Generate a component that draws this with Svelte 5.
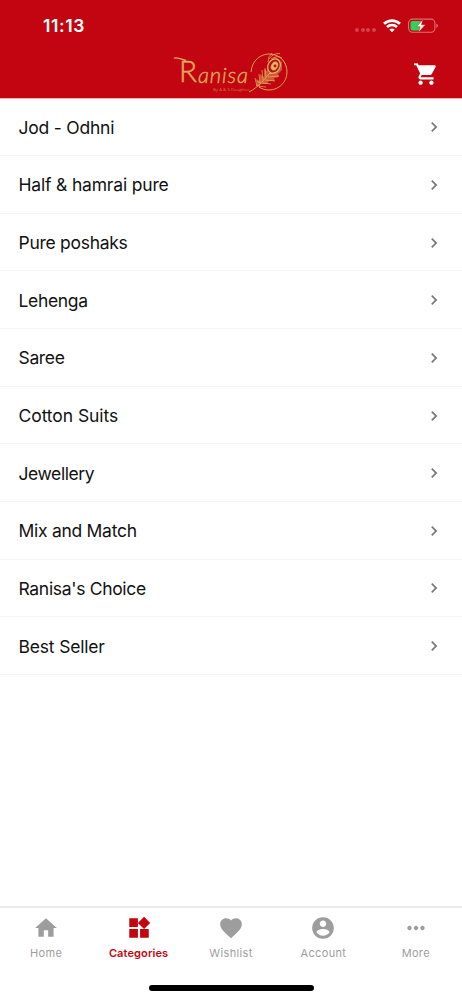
<script lang="ts">
  const categories = [
    { name: 'Jod - Odhni', spacing: -0.22 },
    { name: 'Half & hamrai pure', spacing: -0.18 },
    { name: 'Pure poshaks', spacing: -0.28 },
    { name: 'Lehenga', spacing: -0.33 },
    { name: 'Saree', spacing: -0.35 },
    { name: 'Cotton Suits', spacing: -0.07 },
    { name: 'Jewellery', spacing: -0.42 },
    { name: 'Mix and Match', spacing: -0.28 },
    { name: "Ranisa's Choice", spacing: -0.32 },
    { name: 'Best Seller', spacing: -0.18 }
  ];

  const tabs = [
    { label: 'Home', icon: 'M10 20v-6h4v6h5v-8h3L12 3 2 12h3v8z' },
    { label: 'Categories', icon: 'M13 13v8h8v-8h-8zM3 21h8v-8H3v8zM3 3v8h8V3H3zm13.66-1.31L11 7.34 16.66 13l5.66-5.66-5.66-5.65z' },
    { label: 'Wishlist', icon: 'M12 21.35l-1.45-1.32C5.4 15.36 2 12.28 2 8.5 2 5.42 4.42 3 7.5 3c1.74 0 3.41.81 4.5 2.09C13.09 3.81 14.76 3 16.5 3 19.58 3 22 5.42 22 8.5c0 3.78-3.4 6.86-8.55 11.54L12 21.35z' },
    { label: 'Account', icon: 'M12 2C6.48 2 2 6.48 2 12s4.48 10 10 10 10-4.48 10-10S17.52 2 12 2zm0 3c1.66 0 3 1.34 3 3s-1.34 3-3 3-3-1.34-3-3 1.34-3 3-3zm0 14.2c-2.5 0-4.71-1.28-6-3.22.03-1.99 4-3.08 6-3.08 1.99 0 5.97 1.09 6 3.08-1.29 1.94-3.5 3.22-6 3.22z' },
    { label: 'More', icon: 'M6 10c-1.1 0-2 .9-2 2s.9 2 2 2 2-.9 2-2-.9-2-2-2zm12 0c-1.1 0-2 .9-2 2s.9 2 2 2 2-.9 2-2-.9-2-2-2zm-6 0c-1.1 0-2 .9-2 2s.9 2 2 2 2-.9 2-2-.9-2-2-2z' }
  ];

  let active = $state('Categories');
</script>

<div class="screen">
  <header class="header">
    <div class="status">
      <span class="time">11:13</span>
      <div class="indicators">
        <span class="signal"><i></i><i></i><i></i><i></i></span>
        <svg width="18" height="14" viewBox="0 0 18 14" fill="none" stroke="#fff" stroke-width="2.7">
          <path d="M1 4.7C5.6.5 12.4.5 17 4.7" />
          <path d="M4 8C7 5.4 11 5.4 14 8" />
          <path d="M9 13.3L6.3 10.6Q9 8.6 11.7 10.6Z" fill="#fff" stroke="none" />
        </svg>
        <svg width="31" height="16" viewBox="0 0 31 16">
          <rect x=".6" y="1.1" width="26.3" height="13.2" rx="4" fill="none" stroke="#fff" stroke-opacity=".43" stroke-width="1.1" />
          <path d="M4.5 3H14l-4 5.5h3.2L11.8 12.6H4.5a2 2 0 0 1-2-2V5a2 2 0 0 1 2-2z" fill="#30d158" />
          <path d="M15 1.5L8.6 8.7h3.7L10.4 14.2l7-7.4h-4z" fill="#fff" stroke="#c20510" stroke-width=".4" />
          <path d="M28.4 5.5q1.5.8 1.5 2.2t-1.5 2.2z" fill="#fff" fill-opacity=".45" />
        </svg>
      </div>
    </div>

    <div class="toolbar">
      <svg class="logo" width="116" height="44" viewBox="0 0 116 44" fill="none">
        <defs>
          <linearGradient id="gold" x1="0" y1="0" x2="1" y2="1">
            <stop offset="0" stop-color="#c98b3c" />
            <stop offset=".5" stop-color="#e9bd6b" />
            <stop offset="1" stop-color="#cb8a3a" />
          </linearGradient>
        </defs>
        <g fill="#dfab58" stroke="#dfab58" font-family="Lato, sans-serif" font-weight="300">
          <text x="6" y="29.5" font-size="30" stroke-width=".5" textLength="18" lengthAdjust="spacingAndGlyphs">R</text>
          <text x="25" y="30.5" font-size="22" stroke-width=".4" font-style="italic" textLength="50" lengthAdjust="spacing">anisa</text>
        </g>
        <path d="M1 6.5Q2 4.5 13 8.5" stroke="#dfab58" stroke-width="1.5" />
        <text x="40" y="38.5" font-family="Open Sans, sans-serif" font-size="4.3" fill="#d47a3b" textLength="37">By A &amp; S Daughter</text>
        <path d="M78 20C79 8 88 2 96 2c11 0 18 8 18 18s-8 18-18 18c-4 0-7-1-10-3" stroke="url(#gold)" stroke-width="1" />
        <path d="M84 34L83 27l4 2 0-7 4 3 0-8 3 2 2-8 6-6 7 5 0 8-4 4 1 3-5 1 1 3-6 0-2 3-5 0z" fill="#dfab58" fill-opacity=".5" />
        <g stroke="#e2b160">
          <path d="M76 40C86 35 91 27 99 19" stroke-width=".9" />
          <path d="M84 34l-2-8m5 5l-1-9m4 6l-1-10m4 7l-1-9m-7 18l8 1m-4-4l9 1m-6-4l10 1m-7-4l11-1m-9-2l9-4m-19 16l-4-1m1-4l3 2" stroke-width=".7" />
          <ellipse cx="101" cy="14" rx="6" ry="7.5" transform="rotate(28 101 14)" fill="#b71016" stroke-width="1.3" />
          <ellipse cx="101.5" cy="14" rx="3" ry="4.3" transform="rotate(25 101.5 14)" fill="#e5b45d" stroke-width=".7" />
          <path d="M96 7q4-6 11-5.500M98 7q6-4 11-1M95 10q0-6 4-9" stroke-width=".7" />
        </g>
        <circle cx="102" cy="14" r="1.4" fill="#b71016" />
      </svg>
      <button class="cart" aria-label="Cart">
        <svg width="26" height="26" viewBox="0 0 24 24" fill="currentColor"><path d="M7 18c-1.1 0-1.99.9-1.99 2S5.9 22 7 22s2-.9 2-2-.9-2-2-2zM1 2v2h2l3.6 7.59-1.35 2.45c-.16.28-.25.61-.25.96 0 1.1.9 2 2 2h12v-2H7.42c-.14 0-.25-.11-.25-.25l.03-.12.9-1.63h7.45c.75 0 1.41-.41 1.75-1.03l3.58-6.49c.08-.14.12-.31.12-.48 0-.55-.45-1-1-1H5.21l-.94-2H1zm16 16c-1.1 0-1.99.9-1.99 2s.89 2 1.99 2 2-.9 2-2-.9-2-2-2z" /></svg>
      </button>
    </div>
  </header>

  <main class="list">
    {#each categories as category}
      <button class="row">
        <span style="letter-spacing: {category.spacing}px">{category.name}</span>
        <svg width="20" height="20" viewBox="0 0 24 24" fill="currentColor"><path d="M10 6L8.59 7.41 13.17 12l-4.58 4.59L10 18l6-6z" /></svg>
      </button>
    {/each}
  </main>

  <nav class="tabbar">
    <div class="tabs">
      {#each tabs as tab}
        <button class="tab" class:active={active === tab.label} onclick={() => (active = tab.label)}>
          <svg width="26" height="26" viewBox="0 0 24 24" fill="currentColor"><path d={tab.icon} /></svg>
          <span>{tab.label}</span>
        </button>
      {/each}
    </div>
    <div class="home-indicator"></div>
  </nav>
</div>

<style>
  :global(body) {
    margin: 0;
    background: #fff;
  }

  .screen {
    width: 462px;
    height: 1000px;
    display: flex;
    flex-direction: column;
    overflow: hidden;
    background: #fff;
    font-family: Inter, "Liberation Sans", sans-serif;
  }

  button {
    border: 0;
    padding: 0;
    background: none;
    font: inherit;
    color: inherit;
    text-align: left;
  }

  svg {
    display: block;
    flex: none;
  }

  .header {
    height: 98px;
    flex: none;
    background: #c20510;
    color: #fff;
    box-shadow: 0 1px 0 #eeb0b3;
  }

  .status {
    height: 50px;
    box-sizing: border-box;
    padding: 1px 23px 0 43px;
    display: flex;
    align-items: center;
    justify-content: space-between;
  }

  .time {
    font-size: 17.5px;
    font-weight: 600;
    letter-spacing: 0.6px;
  }

  .indicators {
    display: flex;
    align-items: center;
    gap: 7px;
  }

  .signal {
    display: flex;
    gap: 1.6px;
    padding-top: 8px;
  }

  .signal i {
    width: 4px;
    height: 4px;
    border-radius: 50%;
    background: rgba(255, 255, 255, 0.25);
  }

  .toolbar {
    height: 48px;
    display: grid;
    grid-template-columns: 1fr 116px 1fr;
    align-items: center;
  }

  .logo {
    grid-column: 2;
    overflow: visible;
  }

  .cart {
    justify-self: end;
    margin-right: 23px;
  }

  .list {
    flex: 1;
    padding-top: 0.5px;
  }

  .row {
    width: 100%;
    height: 57.65px;
    box-sizing: border-box;
    padding: 1px 18px 0 18.5px;
    display: flex;
    align-items: center;
    justify-content: space-between;
    border-bottom: 1px solid #f5f5f5;
    font-size: 17.5px;
    color: #111;
  }

  .row svg {
    color: #777;
  }

  .tabbar {
    height: 94px;
    box-sizing: border-box;
    border-top: 2px solid #ebebeb;
    display: flex;
    flex-direction: column;
    align-items: center;
    justify-content: space-between;
    padding-bottom: 9px;
  }

  .tabs {
    width: 100%;
    display: grid;
    grid-template-columns: repeat(5, 1fr);
    padding-top: 7px;
  }

  .tab {
    display: flex;
    flex-direction: column;
    align-items: center;
    gap: 5px;
    color: #9d9d9d;
    font-size: 11px;
    line-height: 15px;
    letter-spacing: 0.35px;
  }

  .tab.active {
    color: #c20510;
    font-weight: 600;
    letter-spacing: 0.12px;
  }

  .home-indicator {
    width: 165px;
    height: 6px;
    border-radius: 3px;
    background: #000;
  }
</style>
